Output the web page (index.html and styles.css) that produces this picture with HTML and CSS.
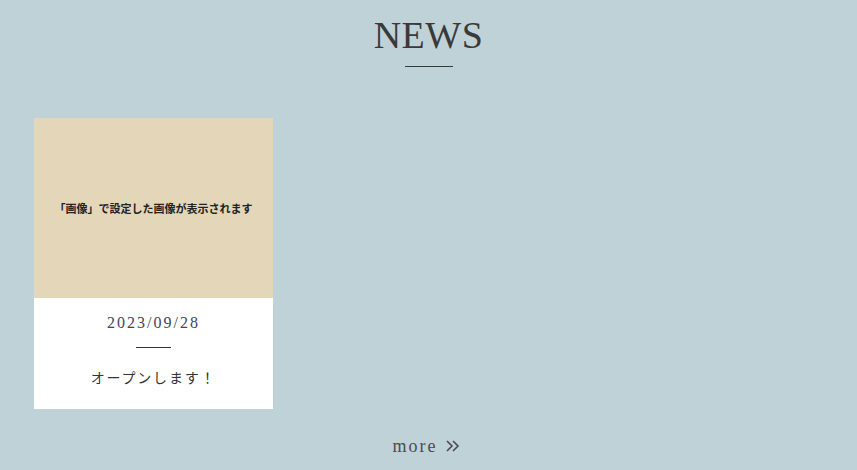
FILE: index.html
```html
<!DOCTYPE html>
<html lang="ja">
    <head>
        <meta charset="utf-8" />
        <title>NEWS</title>
        <meta name="viewport" content="width=device-width, initial-scale=1" />
        <link rel="stylesheet" href="styles.css">
    </head>

    <body>
        <section class="news">
            <h2 class="news-title">NEWS</h2>

            <div class="news-list">
                <a class="news-card" href="#">
                    <div class="news-thumb">
                        <span>「画像」で設定した画像が表示されます</span>
                    </div>
                    <div class="news-body">
                        <p class="news-date">2023/09/28</p>
                        <p class="news-text">オープンします！</p>
                    </div>
                </a>
            </div>

            <a class="news-more" href="#">
                more
                <svg class="arrow" width="14" height="12" viewBox="0 0 14 12">
                    <path d="M1 1 L6 6 L1 11 M7 1 L12 6 L7 11" fill="none" stroke="currentColor" stroke-width="1.6" />
                </svg>
            </a>
        </section>
    </body>
</html>
```

FILE: styles.css
```css
html,
body {
    margin: 0;
    padding: 0;
    --bg-color: #bfd2d8;
    --text-color: #333333;
    --thumb-color: #e3d6b9;

    background: var(--bg-color);
    color: var(--text-color);
    font-family: 'Liberation Serif', 'Noto Sans CJK JP', serif;
}

a {
    color: inherit;
    text-decoration: none;
}

.news {
    display: flex;
    flex-direction: column;
    align-items: center;
    padding-top: 13px;
}

.news-title {
    margin: 0;
    font-weight: normal;
    font-size: 38px;
    line-height: 44px;
    letter-spacing: 0.5px;
    color: #3a3a3a;
}

.news-title::after {
    content: '';
    display: block;
    width: 48px;
    height: 1px;
    margin: 9px auto 0;
    background: #3a3a3a;
}

.news-list {
    align-self: stretch;
    display: flex;
    padding: 51px 34px 0;
}

.news-card {
    width: 239px;
    background: #ffffff;
}

.news-thumb {
    height: 180px;
    display: flex;
    align-items: center;
    justify-content: center;
    background: var(--thumb-color);
    font-family: 'Noto Sans CJK JP', sans-serif;
    font-weight: bold;
    font-size: 11px;
    color: #222222;
}

.news-body {
    padding: 15px 0 22px;
    text-align: center;
}

.news-date {
    margin: 0;
    font-size: 16px;
    line-height: 20px;
    letter-spacing: 2px;
    color: #444455;
}

.news-date::after {
    content: '';
    display: block;
    width: 35px;
    height: 1px;
    margin: 14px auto 0;
    background: #333333;
}

.news-text {
    margin: 19px 0 0;
    font-family: 'Noto Sans CJK JP', sans-serif;
    font-size: 14px;
    line-height: 20px;
    letter-spacing: 1.8px;
    color: #333333;
}

.news-more {
    display: flex;
    align-items: center;
    margin-top: 26px;
    margin-right: 4px;
    font-size: 18px;
    line-height: 22px;
    letter-spacing: 2px;
    color: #4a4a55;
}

.news-more .arrow {
    margin-left: 9px;
}
```
